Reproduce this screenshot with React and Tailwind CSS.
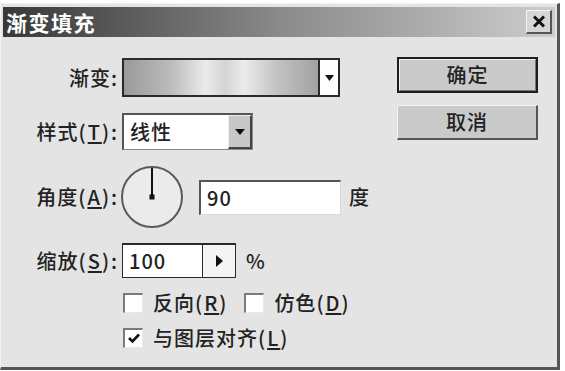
import React from "react";

const FONT = { fontFamily: '"Noto Sans CJK SC", "Noto Sans", sans-serif' };

function U({ children }) {
  return <span className="underline underline-offset-2">{children}</span>;
}

function P({ children }) {
  return <span className="tracking-[2px]">{children}</span>;
}

function Checkbox({ checked }) {
  return (
    <div className="w-[20px] h-[20px] bg-white border-t-2 border-l-2 border-t-[#7a7a7a] border-l-[#7a7a7a] border-r border-b border-r-[#e8e8e8] border-b-[#e8e8e8] flex items-center justify-center">
      {checked && (
        <svg width="14" height="12" viewBox="0 0 14 12">
          <path d="M2 6 L5.5 9.5 L12 2.5" fill="none" stroke="#111" strokeWidth="2.6" />
        </svg>
      )}
    </div>
  );
}

export default function App() {
  return (
    <div className="w-[565px] h-[371px] bg-white overflow-hidden text-[#222]" style={FONT}>
      <div className="mt-[3px] w-[560px] h-[367px] bg-[#e4e4e4] border-t border-l border-t-[#f2f2f2] border-l-[#f2f2f2] border-r-[3px] border-b-[3px] border-r-[#555] border-b-[#555] flex flex-col">
        {/* title bar */}
        <div className="mx-[2px] mt-[3px] h-[30px] flex items-center justify-between bg-linear-to-r from-[#383838] via-[#8a8a8a] to-[#cdcdcd] pl-[3px] pr-[3px]">
          <span className="text-white font-bold text-[21px] leading-none tracking-[1.5px]">渐变填充</span>
          <div className="w-[26px] h-[24px] bg-[#d6d6d6] border-t border-l border-t-[#f4f4f4] border-l-[#f4f4f4] border-r-2 border-b-2 border-r-[#555] border-b-[#555] flex items-center justify-center">
            <svg width="14" height="13" viewBox="0 0 14 13">
              <path d="M2 1.5 L12 11.5 M12 1.5 L2 11.5" stroke="#111" strokeWidth="3" />
            </svg>
          </div>
        </div>
        <div className="flex flex-1">
          {/* left column */}
          <div className="w-[396px] flex flex-col text-[20px] font-medium tracking-[1px]">
            {/* gradient */}
            <div className="mt-[21px] h-[39px] flex items-center">
              <span className="w-[117px] text-right">渐变:</span>
              <div className="ml-[4px] w-[218px] h-[39px] flex border-2 border-[#2a2a2a] bg-white">
                <div className="flex-1 border-r-2 border-[#2a2a2a]" style={{ backgroundImage: "linear-gradient(to right,#9a9a9a 0%,#bdbdbd 25%,#ebebeb 42%,#d4d4d4 52%,#ececec 62%,#c4c4c4 78%,#a2a2a2 100%)" }} />
                <div className="w-[18px] flex items-center justify-center">
                  <svg width="9" height="6" viewBox="0 0 9 6"><path d="M0 0 H9 L4.5 6 Z" fill="#111" /></svg>
                </div>
              </div>
            </div>
            {/* style */}
            <div className="mt-[16px] h-[37px] flex items-center">
              <span className="w-[117px] text-right whitespace-nowrap">样式<P>(<U>T</U>)</P>:</span>
              <div className="ml-[4px] w-[131px] h-[37px] flex bg-white border-t-2 border-l-2 border-t-[#555] border-l-[#555] border-r border-b border-r-[#888] border-b-[#888]">
                <span className="flex-1 pl-[6px] flex items-center">线性</span>
                <div className="w-[24px] bg-[#c8c8c8] border-t border-l border-t-[#eee] border-l-[#eee] border-r-2 border-b-2 border-r-[#444] border-b-[#444] flex items-center justify-center">
                  <svg width="10" height="6" viewBox="0 0 10 6"><path d="M0 0 H10 L5 6 Z" fill="#111" /></svg>
                </div>
              </div>
            </div>
            {/* angle */}
            <div className="mt-[15px] h-[64px] flex items-center">
              <span className="w-[117px] text-right whitespace-nowrap">角度<P>(<U>A</U>)</P>:</span>
              <svg className="ml-[2px]" width="64" height="64" viewBox="0 0 64 64">
                <circle cx="32" cy="32" r="30" fill="#ebebeb" stroke="#5a5a5a" strokeWidth="2" />
                <line x1="32" y1="3" x2="32" y2="32" stroke="#111" strokeWidth="2" />
                <rect x="29.5" y="29.5" width="5" height="5" fill="#111" />
              </svg>
              <div className="ml-[15px] w-[142px] h-[35px] bg-white border-t-2 border-l-2 border-t-[#555] border-l-[#555] border-r border-b border-r-[#d8d8d8] border-b-[#d8d8d8] pl-[6px] flex items-center">
                90
              </div>
              <span className="ml-[8px]">度</span>
            </div>
            {/* scale */}
            <div className="mt-[14px] h-[35px] flex items-center">
              <span className="w-[117px] text-right whitespace-nowrap">缩放<P>(<U>S</U>)</P>:</span>
              <div className="ml-[4px] w-[114px] h-[35px] flex bg-white border border-[#2a2a2a] border-t-2">
                <span className="flex-1 pl-[6px] flex items-center">100</span>
                <div className="w-[33px] border-l border-[#2a2a2a] flex items-center justify-center bg-[#f4f4f4]">
                  <svg width="7" height="12" viewBox="0 0 7 12"><path d="M0 0 L7 6 L0 12 Z" fill="#111" /></svg>
                </div>
              </div>
              <span className="ml-[10px]">%</span>
            </div>
            {/* checkboxes */}
            <div className="mt-[15px] h-[20px] flex items-center pl-[122px]">
              <Checkbox />
              <span className="ml-[10px] whitespace-nowrap">反向<P>(<U>R</U>)</P></span>
              <div className="ml-[16px]"><Checkbox /></div>
              <span className="ml-[10px] whitespace-nowrap">仿色<P>(<U>D</U>)</P></span>
            </div>
            <div className="mt-[14px] h-[21px] flex items-center pl-[122px]">
              <Checkbox checked />
              <span className="ml-[10px] whitespace-nowrap">与图层对齐<P>(<U>L</U>)</P></span>
            </div>
          </div>
          {/* right column */}
          <div className="flex flex-col text-[20px] font-medium tracking-[1px]">
            <div className="mt-[20px] w-[141px] h-[36px] bg-[#cacaca] border-2 border-[#1e1e1e] flex items-center justify-center">
              <div className="w-full h-full border-t border-l border-t-[#eee] border-l-[#eee] border-r border-b border-r-[#777] border-b-[#777] flex items-center justify-center">确定</div>
            </div>
            <div className="mt-[12px] w-[141px] h-[35px] bg-[#cacaca] border-t border-l border-t-[#f2f2f2] border-l-[#f2f2f2] border-r-2 border-b-2 border-r-[#555] border-b-[#555] flex items-center justify-center">
              取消
            </div>
          </div>
        </div>
      </div>
    </div>
  );
}
